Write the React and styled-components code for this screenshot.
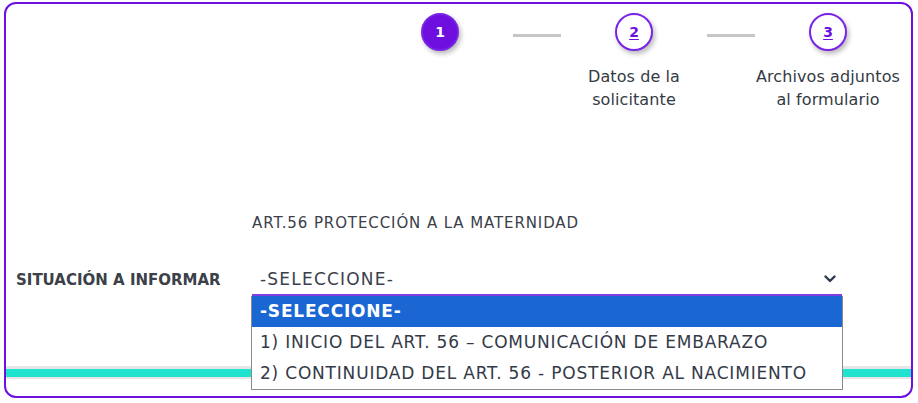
import React from 'react';
import styled, { createGlobalStyle } from 'styled-components';

const GlobalStyle = createGlobalStyle`
  html, body {
    margin: 0;
    padding: 0;
    background: #ffffff;
  }
  body {
    font-family: "DejaVu Sans", "Noto Sans", sans-serif;
    color: #3b4049;
  }
`;

const steps = [
  { n: 1, label: '', active: true },
  { n: 2, label: ['Datos de la', 'solicitante'] },
  { n: 3, label: ['Archivos adjuntos', 'al formulario'] },
];

const options = [
  '-SELECCIONE-',
  '1) INICIO DEL ART. 56 – COMUNICACIÓN DE EMBARAZO',
  '2) CONTINUIDAD DEL ART. 56 - POSTERIOR AL NACIMIENTO',
];

export default function App() {
  return (
    <>
      <GlobalStyle />
      <Frame>
        <Stepper>
          {steps.map((s, i) => (
            <React.Fragment key={s.n}>
              {i > 0 && <Connector />}
              <Step>
                <Circle active={s.active}>
                  {s.active ? s.n : <u>{s.n}</u>}
                </Circle>
                {s.label && (
                  <StepLabel>
                    {s.label[0]}
                    <br />
                    {s.label[1]}
                  </StepLabel>
                )}
              </Step>
            </React.Fragment>
          ))}
        </Stepper>

        <Form>
          <span />
          <Title>ART.56 PROTECCIÓN A LA MATERNIDAD</Title>
          <FieldLabel>SITUACIÓN A INFORMAR</FieldLabel>
          <SelectWrap>
            <SelectBox>
              <span>-SELECCIONE-</span>
              <svg width="12" height="8" viewBox="0 0 12 8">
                <path d="M1.5 1.5 L6 6 L10.5 1.5" fill="none" stroke="#2f3a4f" strokeWidth="2.4" strokeLinecap="round" strokeLinejoin="round" />
              </svg>
            </SelectBox>
            <OptionList>
              {options.map((o, i) => (
                <Option key={o} selected={i === 0}>{o}</Option>
              ))}
            </OptionList>
          </SelectWrap>
        </Form>

        <Divider />
      </Frame>
    </>
  );
}

const Frame = styled.div`
  box-sizing: border-box;
  margin: 2px 5px 0 4px;
  height: 396px;
  border: 2px solid #6e0fe0;
  border-radius: 12px;
  display: flex;
  flex-direction: column;
`;

const Stepper = styled.div`
  display: flex;
  justify-content: flex-end;
  align-items: flex-start;
  padding: 9px 10px 0 0;
`;

const Step = styled.div`
  width: 146px;
  display: flex;
  flex-direction: column;
  align-items: center;
`;

const Circle = styled.div`
  box-sizing: border-box;
  width: 38px;
  height: 38px;
  border-radius: 50%;
  display: flex;
  align-items: center;
  justify-content: center;
  font-size: 14px;
  font-weight: bold;
  background: ${(p) => (p.active ? '#6e0fe0' : '#ffffff')};
  color: ${(p) => (p.active ? '#ffffff' : '#6e0fe0')};
  border: 2px solid #7a22e6;
  box-shadow: 2px 3px 5px rgba(0, 0, 0, 0.28);
  u {
    text-underline-offset: 2px;
  }
`;

const Connector = styled.div`
  width: 48px;
  height: 3px;
  margin-top: 21px;
  background: #c6c6c6;
`;

const StepLabel = styled.div`
  margin: 14px -40px 0;
  text-align: center;
  font-size: 16px;
  letter-spacing: 0.1px;
  line-height: 23px;
  color: #353a44;
  white-space: nowrap;
`;

const Form = styled.div`
  display: grid;
  grid-template-columns: 236px 590px;
  row-gap: 32px;
  align-items: center;
  padding-left: 10px;
  margin-top: 103px;
`;

const Title = styled.div`
  font-size: 15px;
  letter-spacing: 0.9px;
  color: #3b4049;
`;

const FieldLabel = styled.div`
  font-size: 15px;
  font-weight: bold;
  color: #3b4049;
`;

const SelectWrap = styled.div`
  position: relative;
`;

const SelectBox = styled.div`
  display: flex;
  align-items: center;
  justify-content: space-between;
  box-sizing: border-box;
  height: 32px;
  padding: 0 6px 0 8px;
  border-bottom: 2px solid #7e3ee0;
  font-size: 17px;
  letter-spacing: 1.2px;
  color: #3b4049;
`;

const OptionList = styled.div`
  position: absolute;
  top: 100%;
  left: -1px;
  right: -1px;
  background: #ffffff;
  border: 1px solid #8a8a8a;
  border-top: none;
  z-index: 2;
`;

const Option = styled.div`
  height: 31px;
  line-height: 31px;
  padding-left: 8px;
  font-size: 17px;
  letter-spacing: 0.8px;
  white-space: nowrap;
  background: ${(p) => (p.selected ? '#1a66d2' : '#ffffff')};
  color: ${(p) => (p.selected ? '#ffffff' : '#343a48')};
  font-weight: ${(p) => (p.selected ? 'bold' : 'normal')};
`;

const Divider = styled.div`
  margin-top: auto;
  margin-bottom: 17px;
  height: 8px;
  background: #1fe2cf;
  border-top: 3px solid #e6e6e6;
  border-bottom: 2px solid #e6e6e6;
`;
